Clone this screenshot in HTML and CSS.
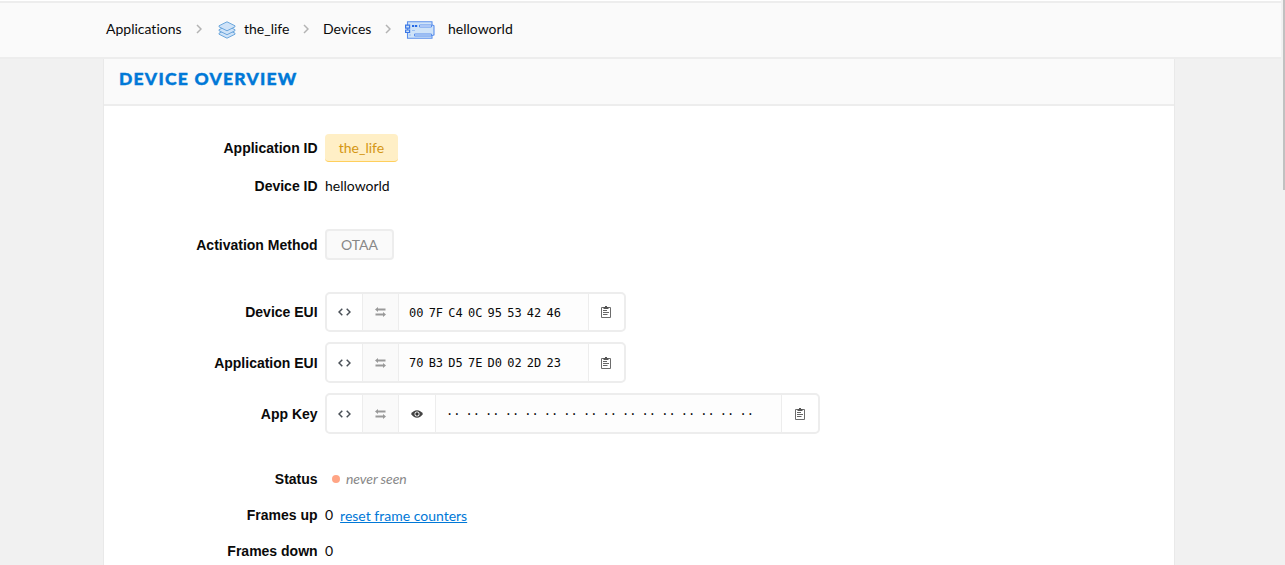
FILE: index.html
```html
<!DOCTYPE html>
<html lang="en">
<head>
<meta charset="utf-8">
<title>Device overview</title>
<link rel="stylesheet" href="styles.css">
</head>
<body>
<svg class="defs" width="0" height="0">
  <symbol id="chevron" viewBox="0 0 6 10"><path d="M1 1l4 4-4 4" fill="none" stroke="#b3b3b3" stroke-width="1.5"/></symbol>
  <symbol id="code" viewBox="0 0 13 8"><path d="M4.300.7L1 4l3.300 3.300M8.700.7L12 4 8.700 7.300" fill="none" stroke="#4a5057" stroke-width="1.500"/></symbol>
  <symbol id="swap" viewBox="0 0 11 10"><path d="M0 2.500L3 0v1.500h7.500v2H3V5zM11 7.500L8 5v1.500H.5v2H8V10z" fill="#999"/></symbol>
  <symbol id="clip" viewBox="0 0 10 12"><path d="M.5 1.500h9v10h-9z" fill="#fff" stroke="#6c6c6c"/><path d="M2.500 1h1.500V0h2v1h1.500v2h-5z" fill="#555"/><path d="M2 4.500h4M2 6.500h6M2 8.500h4.500" stroke="#666"/></symbol>
  <symbol id="eye" viewBox="0 0 12 8"><path d="M0 4Q2.500.3 6 .3T12 4Q9.500 7.700 6 7.700T0 4z" fill="#444"/><circle cx="6" cy="4" r="2.500" fill="#fff"/><circle cx="6" cy="4" r="1.700" fill="#333"/></symbol>
</svg>
<div class="page">
  <div class="main">
    <nav class="crumbs">
      <a class="crumb crumb-apps">Applications</a>
      <svg class="chevron"><use href="#chevron"/></svg>
      <svg class="layers" viewBox="0 0 18 18" fill="#cfe3f8" stroke="#6ba6dc" stroke-linejoin="round">
        <path d="M1 12.200l8-4 8 4v1l-8 4-8-4z"/><path d="M1 8.700l8-4 8 4v1l-8 4-8-4z"/><path d="M1 4.800l8-4 8 4v1l-8 4-8-4z"/>
      </svg>
      <a class="crumb crumb-life">the_life</a>
      <svg class="chevron"><use href="#chevron"/></svg>
      <a class="crumb crumb-devices">Devices</a>
      <svg class="chevron"><use href="#chevron"/></svg>
      <svg class="board" viewBox="0 0 30 18">
        <path d="M2.500 .8h24.500v3l2 1v9l-2 1v2.500h-24.500z" fill="#cfe3f8" stroke="#5b8fec" stroke-width="1.100"/>
        <path d="M.6 4.200h4v3h-4zM.6 9h4v2.500h-4z" fill="#cfe3f8" stroke="#3c78e6" stroke-width="1.200"/>
        <path d="M7 4h2.200v2H7zM10 4h2.200v2H10z" fill="#2468e6"/>
        <path d="M14.500 4h12v2h-12z" fill="#fff" stroke="#5b8fec"/>
        <path d="M9.500 13h17v2h-17z" fill="#dcebfb" stroke="#5b8fec"/>
        <path d="M7 9.500h3M4 14h2" stroke="#9bbff3"/>
      </svg>
      <a class="crumb">helloworld</a>
    </nav>
    <section class="sheet">
      <h1 class="title">Device Overview</h1>
      <div class="rows">
        <div class="row"><span class="label">Application ID</span><span class="tag">the_life</span></div>
        <div class="row row-id"><span class="label">Device ID</span><span>helloworld</span></div>
        <div class="row row-method"><span class="label">Activation Method</span><span class="method">OTAA</span></div>
        <div class="row row-dev-eui"><span class="label">Device EUI</span>
          <div class="field"><span class="cell"><svg class="code"><use href="#code"/></svg></span><span class="cell muted"><svg class="swap"><use href="#swap"/></svg></span><code class="bytes bytes-low"><i>00</i><i>7F</i><i>C4</i><i>0C</i><i>95</i><i>53</i><i>42</i><i>46</i></code><span class="cell copy"><svg class="clip"><use href="#clip"/></svg></span></div>
        </div>
        <div class="row row-app-eui"><span class="label">Application EUI</span>
          <div class="field"><span class="cell"><svg class="code"><use href="#code"/></svg></span><span class="cell muted"><svg class="swap"><use href="#swap"/></svg></span><code class="bytes"><i>70</i><i>B3</i><i>D5</i><i>7E</i><i>D0</i><i>02</i><i>2D</i><i>23</i></code><span class="cell copy"><svg class="clip"><use href="#clip"/></svg></span></div>
        </div>
        <div class="row row-key"><span class="label">App Key</span>
          <div class="field field-key"><span class="cell"><svg class="code"><use href="#code"/></svg></span><span class="cell muted"><svg class="swap"><use href="#swap"/></svg></span><span class="cell reveal"><svg class="eye"><use href="#eye"/></svg></span><code class="bytes bytes-key"><i>··</i><i>··</i><i>··</i><i>··</i><i>··</i><i>··</i><i>··</i><i>··</i><i>··</i><i>··</i><i>··</i><i>··</i><i>··</i><i>··</i><i>··</i><i>··</i></code><span class="cell copy copy-key"><svg class="clip"><use href="#clip"/></svg></span></div>
        </div>
        <div class="row row-status"><span class="label">Status</span><span class="dot"></span><em class="never">never seen</em></div>
        <div class="row row-frames"><span class="label">Frames up</span><span>0</span><a class="reset">reset frame counters</a></div>
        <div class="row row-frames"><span class="label">Frames down</span><span>0</span></div>
      </div>
    </section>
  </div>
  <div class="scroll"><div class="thumb"></div></div>
</div>
</body>
</html>
```
FILE: styles.css
```css
* { box-sizing: border-box; }
body { margin: 0; overflow: hidden; font: 14px/20px Lato, sans-serif; font-variant-ligatures: none; color: #0a0a0a; background: #f1f1f1; }
.defs { position: absolute; }
.page { display: flex; height: 565px; }
.main { flex: 1; display: flex; flex-direction: column; border-top: 1px solid #fff; }
.crumbs { display: flex; align-items: center; height: 58px; flex: none; padding: 0 0 2px 106px; background: #fafafa; border-top: 2px solid #ededed; border-bottom: 2px solid #ededed; }
.crumb { flex: none; }
.crumb-apps { width: 90px; }
.crumb-life { width: 59px; }
.crumb-devices { width: 62px; margin-left: 14px; }
.chevron { width: 6px; height: 10px; flex: none; }
.layers { width: 18px; height: 18px; margin: 1px 8px 0 16px; flex: none; }
.board { width: 30px; height: 18px; margin: 2px 13px 0 14px; flex: none; }
.sheet { width: 1072px; flex: 1; min-height: 0; margin-left: 103px; background: #fff; border: solid #e9e9e9; border-width: 0 1px; overflow: hidden; }
.title { margin: 0; height: 47px; padding: 8px 15px 0; font-size: 17.5px; line-height: 24px; font-weight: 900; letter-spacing: 1.25px; -webkit-text-stroke: .4px #0078d7; text-transform: uppercase; color: #0078d7; background: #fafafa; border-bottom: 2px solid #ededed; }
.rows { padding-top: 28px; }
.row { display: flex; align-items: center; height: 28px; }
.label { width: 213.600px; margin-right: 7.400px; text-align: right; font: bold 14px/20px "Liberation Sans", Arial, sans-serif; }
.tag { height: 28px; width: 73px; line-height: 28px; text-align: center; color: #d49614; background: #ffefc6; border-bottom: 1px solid #ffcf5c; border-radius: 4px; }
.row-id { margin-top: 10px; }
.row-method { margin-top: 29px; height: 31px; }
.method { width: 69px; height: 31px; line-height: 28px; text-align: center; color: #888; background: #fafafa; border: 2px solid #ededed; border-radius: 4px; }
.row-dev-eui { margin-top: 32px; height: 40px; }
.row-app-eui { margin-top: 10px; height: 41px; }
.row-key { margin-top: 10px; height: 41px; }
.row-status { margin-top: 31px; }
.row-frames { margin-top: 8px; }
.field { display: flex; width: 301px; height: 100%; border: 2px solid #ededed; border-radius: 5px; background: #fff; overflow: hidden; }
.field-key { width: 495px; }
.cell { width: 36px; flex: none; display: flex; align-items: center; justify-content: center; border-right: 1px solid #ededed; }
.muted { background: #fafafa; }
.reveal { width: 37px; }
.copy { border-right: 0; border-left: 1px solid #ededed; }
.copy-key { width: 37px; }
.bytes { flex: 1; display: flex; align-items: center; padding-left: 10px; gap: 5.200px; font: 12px/16px "DejaVu Sans Mono", monospace; background: #fdfdfd; }
.bytes i { font-style: normal; }
.bytes-low { padding-top: 1px; }
.bytes-key { gap: 5.120px; }
.code { width: 13px; height: 8px; }
.swap { width: 11px; height: 10px; }
.clip { width: 10px; height: 12px; }
.eye { width: 12px; height: 8px; }
.dot { width: 8px; height: 8px; margin: 0 6px 1px 7px; border-radius: 50%; background: #ffa585; }
.never { color: #888; letter-spacing: -.08px; }
.reset { margin: 2px 0 0 7px; color: #0078d7; text-decoration: underline; }
.scroll { width: 4px; background: #f1f1f1; padding-left: 2px; }
.thumb { height: 190px; background: #c1c1c1; }
```
